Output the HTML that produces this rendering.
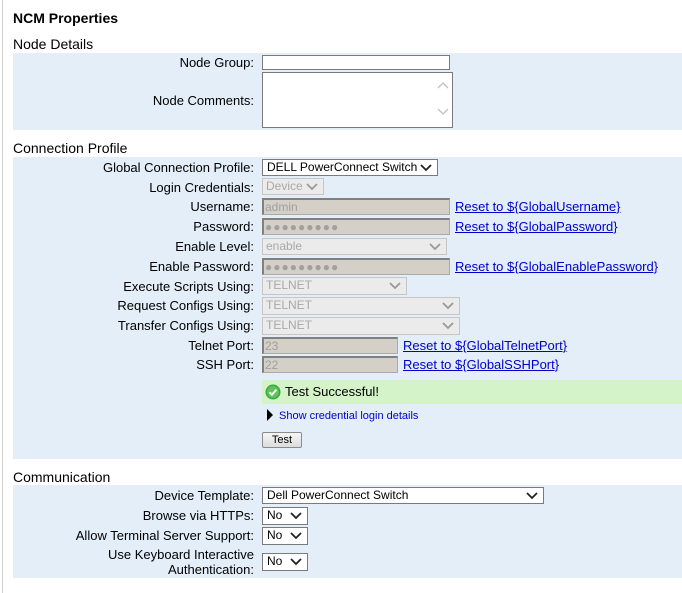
<!DOCTYPE html>
<html><head><style>
body{margin:0;width:682px;height:593px;background:#fff;position:relative;overflow:hidden;font-family:"Liberation Sans",Arial,sans-serif;font-size:12px;color:#000}
.a{position:absolute;white-space:nowrap}
.band{position:absolute;left:13px;right:0;background:#e3eef8}
.lb{position:absolute;right:428px;text-align:right;line-height:15px;font-size:13px;white-space:nowrap}
.h{position:absolute;left:13px;font-size:14px}
.inp{position:absolute;background:#fff;border:1px solid #7a7a7a;box-sizing:border-box}
.dis{position:absolute;background:#d4d0c8;border:1px solid #aaa;border-top:2px solid #808080;border-left:2px solid #808080;box-sizing:border-box;color:#a0a0a0;font-size:12px;line-height:14px;padding-left:1px}
.sel{position:absolute;background:#fff;border:1px solid #7a7a7a;box-sizing:border-box;padding-left:4px;line-height:15px}
.sd{position:absolute;background:#ebebeb;border:1px solid #c6c6c6;box-sizing:border-box;padding-left:3px;color:#a8a8a8;line-height:15px}
.chev{position:absolute;right:5px;top:4px;width:12px;height:8px}
a{color:#0000cc;text-decoration:underline;position:absolute;white-space:nowrap;font-size:13px;line-height:15px}
</style></head><body>
<div class="a" style="left:2px;top:0;width:1px;height:593px;background:#d0d0d0"></div>
<div class="a" style="left:13px;top:10px;font-weight:bold;font-size:14px">NCM Properties</div>
<div class="h" style="top:36px">Node Details</div>
<div class="band" style="top:53px;height:77px"></div>
<div class="lb" style="top:55px">Node Group:</div>
<div class="inp" style="left:262px;top:55px;width:188px;height:15px"></div>
<div class="lb" style="top:93px">Node Comments:</div>
<div class="inp" style="left:262px;top:72px;width:191px;height:56px"></div>
<svg class="a" style="left:436px;top:80px" width="14" height="40"><path d="M2 8l5-5 5 5M2 29l5 5 5-5" stroke="#c0c0c0" fill="none" stroke-width="1.3"/></svg>

<div class="h" style="top:140px">Connection Profile</div>
<div class="band" style="top:157px;height:302px"></div>
<div class="lb" style="top:160px">Global Connection Profile:</div>
<div class="sel" style="left:262px;top:159px;width:176px;height:17px">DELL PowerConnect Switch<svg class="chev" viewBox="0 0 12 8"><path d="M1 1l5 5 5-5" stroke="#222" stroke-width="1.8" fill="none"/></svg></div>
<div class="lb" style="top:180px">Login Credentials:</div>
<div class="sd" style="left:262px;top:178px;width:62px;height:17px">Device<svg class="chev" viewBox="0 0 12 8"><path d="M1 1l5 5 5-5" stroke="#999" stroke-width="1.8" fill="none"/></svg></div>
<div class="lb" style="top:199px">Username:</div>
<div class="dis" style="left:262px;top:198px;width:188px;height:17px">admin</div>
<a style="left:455px;top:199px">Reset to ${GlobalUsername}</a>
<div class="lb" style="top:219px">Password:</div>
<div class="dis" style="left:262px;top:218px;width:188px;height:17px;letter-spacing:1px">●●●●●●●●●</div>
<a style="left:455px;top:219px">Reset to ${GlobalPassword}</a>
<div class="lb" style="top:239px">Enable Level:</div>
<div class="sd" style="left:262px;top:238px;width:185px;height:17px">enable<svg class="chev" viewBox="0 0 12 8"><path d="M1 1l5 5 5-5" stroke="#999" stroke-width="1.8" fill="none"/></svg></div>
<div class="lb" style="top:259px">Enable Password:</div>
<div class="dis" style="left:262px;top:258px;width:188px;height:17px;letter-spacing:1px">●●●●●●●●●</div>
<a style="left:455px;top:259px">Reset to ${GlobalEnablePassword}</a>
<div class="lb" style="top:279px">Execute Scripts Using:</div>
<div class="sd" style="left:262px;top:277px;width:145px;height:18px">TELNET<svg class="chev" viewBox="0 0 12 8"><path d="M1 1l5 5 5-5" stroke="#999" stroke-width="1.8" fill="none"/></svg></div>
<div class="lb" style="top:298px">Request Configs Using:</div>
<div class="sd" style="left:262px;top:297px;width:198px;height:18px">TELNET<svg class="chev" viewBox="0 0 12 8"><path d="M1 1l5 5 5-5" stroke="#999" stroke-width="1.8" fill="none"/></svg></div>
<div class="lb" style="top:318px">Transfer Configs Using:</div>
<div class="sd" style="left:262px;top:317px;width:198px;height:18px">TELNET<svg class="chev" viewBox="0 0 12 8"><path d="M1 1l5 5 5-5" stroke="#999" stroke-width="1.8" fill="none"/></svg></div>
<div class="lb" style="top:338px">Telnet Port:</div>
<div class="dis" style="left:262px;top:337px;width:136px;height:17px">23</div>
<a style="left:403px;top:338px">Reset to ${GlobalTelnetPort}</a>
<div class="lb" style="top:357px">SSH Port:</div>
<div class="dis" style="left:262px;top:356px;width:136px;height:17px">22</div>
<a style="left:403px;top:357px">Reset to ${GlobalSSHPort}</a>
<div class="a" style="left:262px;top:380px;width:420px;height:24px;background:#d4f3c8"></div>
<svg class="a" style="left:265px;top:384px" width="16" height="16"><circle cx="8" cy="8" r="7.5" fill="#3aa83a"/><circle cx="8" cy="8" r="6" fill="#5cc45a"/><path d="M4.5 8.3l2.4 2.4 4.6-5" stroke="#fff" stroke-width="2" fill="none"/></svg>
<div class="a" style="left:285px;top:384px;font-size:13px">Test Successful!</div>
<svg class="a" style="left:267px;top:409px" width="7" height="12"><path d="M0 0l6 6-6 6z" fill="#000"/></svg>
<div class="a" style="left:279px;top:410px;font-size:11px;color:#0000cc">Show credential login details</div>
<div class="a" style="left:262px;top:432px;width:40px;height:16px;border:1px solid #8a8a8a;border-radius:2px;background:linear-gradient(#f6f6f6,#dcdcdc);box-sizing:border-box;text-align:center;line-height:14px;font-size:11px">Test</div>

<div class="h" style="top:469px">Communication</div>
<div class="band" style="top:485px;height:93px"></div>
<div class="lb" style="top:488px">Device Template:</div>
<div class="sel" style="left:262px;top:487px;width:282px;height:17px">Dell PowerConnect Switch<svg class="chev" viewBox="0 0 12 8"><path d="M1 1l5 5 5-5" stroke="#222" stroke-width="1.8" fill="none"/></svg></div>
<div class="lb" style="top:508px">Browse via HTTPs:</div>
<div class="sel" style="left:262px;top:507px;width:46px;height:18px">No<svg class="chev" viewBox="0 0 12 8"><path d="M1 1l5 5 5-5" stroke="#222" stroke-width="1.8" fill="none"/></svg></div>
<div class="lb" style="top:528px">Allow Terminal Server Support:</div>
<div class="sel" style="left:262px;top:527px;width:46px;height:18px">No<svg class="chev" viewBox="0 0 12 8"><path d="M1 1l5 5 5-5" stroke="#222" stroke-width="1.8" fill="none"/></svg></div>
<div class="lb" style="top:547px">Use Keyboard Interactive<br>Authentication:</div>
<div class="sel" style="left:262px;top:553px;width:46px;height:18px">No<svg class="chev" viewBox="0 0 12 8"><path d="M1 1l5 5 5-5" stroke="#222" stroke-width="1.8" fill="none"/></svg></div>
</body></html>
